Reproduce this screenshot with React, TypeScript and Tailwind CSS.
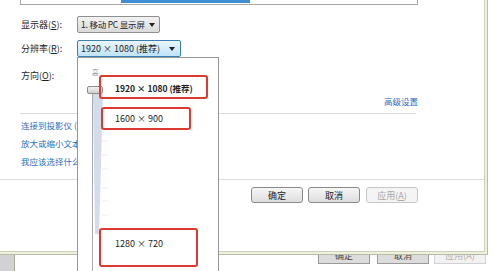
import React from 'react';

const font = { fontFamily: '"Noto Sans CJK SC", "Noto Sans", sans-serif' };

function Arrow() {
  return (
    <svg width="6" height="4" viewBox="0 0 6 4" className="shrink-0">
      <path d="M0 0 H6 L3 4 Z" fill="#222" />
    </svg>
  );
}

function Btn({ label, disabled }: { label: React.ReactNode; disabled?: boolean }) {
  return (
    <div
      className={`w-[52px] h-[16px] rounded-[3px] border flex items-center justify-center text-[9px] leading-none ${
        disabled
          ? 'border-[#c4c7c9] bg-[#f4f4f4] text-[#a6a6a6]'
          : 'border-[#8a8a8a] bg-gradient-to-b from-[#f6f6f6] to-[#dedede] text-[#222]'
      }`}
    >
      {label}
    </div>
  );
}

function BackBtn({ label, disabled }: { label: string; disabled?: boolean }) {
  return (
    <div
      className={`w-[52px] h-[9px] overflow-hidden border-x border-b flex justify-center ${
        disabled ? 'border-[#cfd2d4] bg-[#f2f2f2] text-[#b0b0b0]' : 'border-[#9a9a9a] bg-[#dcdcdc] text-[#444]'
      }`}
    >
      <span className="block text-[9px] leading-[12px] -mt-[5px] whitespace-nowrap">{label}</span>
    </div>
  );
}

export default function App() {
  const ticks = [140, 154, 168, 187, 200, 214];
  return (
    <div className="relative w-[500px] h-[271px] overflow-hidden bg-white text-[#1e1e1e]" style={font}>
      {/* dialog window */}
      <div className="w-[488px] h-[255px] border-r border-b border-[#b9bea2] bg-[#eef0df]">
        <div className="w-[485px] h-[252px] bg-white border-r border-b border-[#cdd1ba]">
          {/* bottom of preview box */}
          <div className="ml-[20px] w-[398px] h-[5px] border-x border-b border-[#a8a8a8]">
            <div className="ml-[100px] w-[129px] h-[3px] bg-[#3f8fd6]" />
          </div>

          <div className="mt-[11px] flex items-center h-[17px] pl-[21px] text-[9px]">
            <span className="w-[56px] whitespace-nowrap">
              显示器(<span className="underline">S</span>):
            </span>
            <div className="w-[83px] h-[17px] rounded-[2px] border border-[#8e8f8f] bg-gradient-to-b from-[#f3f3f3] to-[#dadada] flex items-center justify-between pl-[3px] pr-[4px]">
              <span className="leading-none whitespace-nowrap text-[8.5px] tracking-[-0.2px]">1. 移动 PC 显示屏</span>
              <Arrow />
            </div>
          </div>

          <div className="mt-[7px] flex items-center h-[17px] pl-[21px] text-[9px]">
            <span className="w-[56px] whitespace-nowrap">
              分辨率(<span className="underline">R</span>):
            </span>
            <div className="w-[104px] h-[17px] rounded-[2px] border border-[#3c7fb1] bg-gradient-to-b from-[#eaf6fd] to-[#c0e4f8] flex items-center justify-between pl-[3px] pr-[5px]">
              <span className="leading-none whitespace-nowrap">1920 × 1080 (推荐)</span>
              <Arrow />
            </div>
          </div>

          <div className="mt-[12px] flex items-center h-[14px] pl-[21px] text-[9px]">
            <span>
              方向(<span className="underline">O</span>):
            </span>
          </div>

          <div className="mt-[12px] h-[12px] w-[418px] flex items-center justify-end text-[8.5px] text-[#2d6fc0]">
            高级设置
          </div>

          <div className="mt-[6px] ml-[20px] w-[396px] h-px bg-[#dadada]" />

          <div className="mt-[2px] pl-[21px] text-[8.5px] text-[#2d6fc0]">
            <div className="h-[18px] flex items-center">连接到投影仪 (或按 Windows 徽标键+P)</div>
            <div className="h-[18px] flex items-center">放大或缩小文本和其他项目</div>
            <div className="h-[18px] flex items-center">我应该选择什么显示器设置?</div>
          </div>

          <div className="mt-[9px] h-px bg-[#dcdcdc]" />

          <div className="mt-[7px] w-[418px] flex justify-end">
            <Btn label="确定" />
            <div className="ml-[5px]">
              <Btn label="取消" />
            </div>
            <div className="ml-[6px]">
              <Btn
                disabled
                label={
                  <>
                    应用(<span className="underline">A</span>)
                  </>
                }
              />
            </div>
          </div>
        </div>
      </div>

      {/* window behind */}
      <div className="flex h-[16px]">
        <div className="w-[15px] h-full bg-[#d2d2d2] border-r border-[#a9ad98]" />
        <div className="ml-[303px] flex">
          <BackBtn label="确定" />
          <div className="ml-[7px]">
            <BackBtn label="取消" />
          </div>
          <div className="ml-[5px]">
            <BackBtn label="应用(A)" disabled />
          </div>
        </div>
      </div>

      {/* open resolution dropdown */}
      <div className="absolute left-[77px] top-[57px] w-[142px] h-[216px] bg-white border border-[#979797]">
        <span className="absolute left-[14px] top-[11px] text-[6.5px] leading-none text-[#8a8a8a]">高</span>
        <svg className="absolute left-0 top-0" width="140" height="214" viewBox="0 0 140 214">
          <polygon points="15,36 25,36 21,176 17,176" fill="#d3dceb" />
          <line x1="14.5" y1="36" x2="14.5" y2="214" stroke="#a9a9a9" strokeWidth="1" />
          {ticks.map((t) => (
            <line key={t} x1="24" y1={t - 57} x2="30" y2={t - 57} stroke="#ebebeb" strokeWidth="1" />
          ))}
        </svg>
        <div className="absolute left-[9px] top-[28px] w-[16px] h-[8px] rounded-[2px] border border-[#8d8d8d] bg-gradient-to-b from-[#f4f4f4] to-[#cfcfcf]" />

        <div className="absolute left-[21px] top-[17px] w-[109px] h-[24px] rounded-[3px] border-2 border-[#dc3a2e] flex items-center pl-[14px] pt-[3px] text-[8.5px] font-bold whitespace-nowrap">
          1920 × 1080 (推荐)
        </div>
        <div className="absolute left-[23px] top-[49px] w-[90px] h-[23px] rounded-[3px] border-2 border-[#dc3a2e] flex items-center pl-[12px] text-[9px]">
          1600 × 900
        </div>
        <div className="absolute left-[21px] top-[170px] w-[99px] h-[39px] rounded-[3px] border-2 border-[#dc3a2e] pl-[14px] pt-[8px] text-[9px] leading-[12px]">
          1280 × 720
        </div>
      </div>
    </div>
  );
}
